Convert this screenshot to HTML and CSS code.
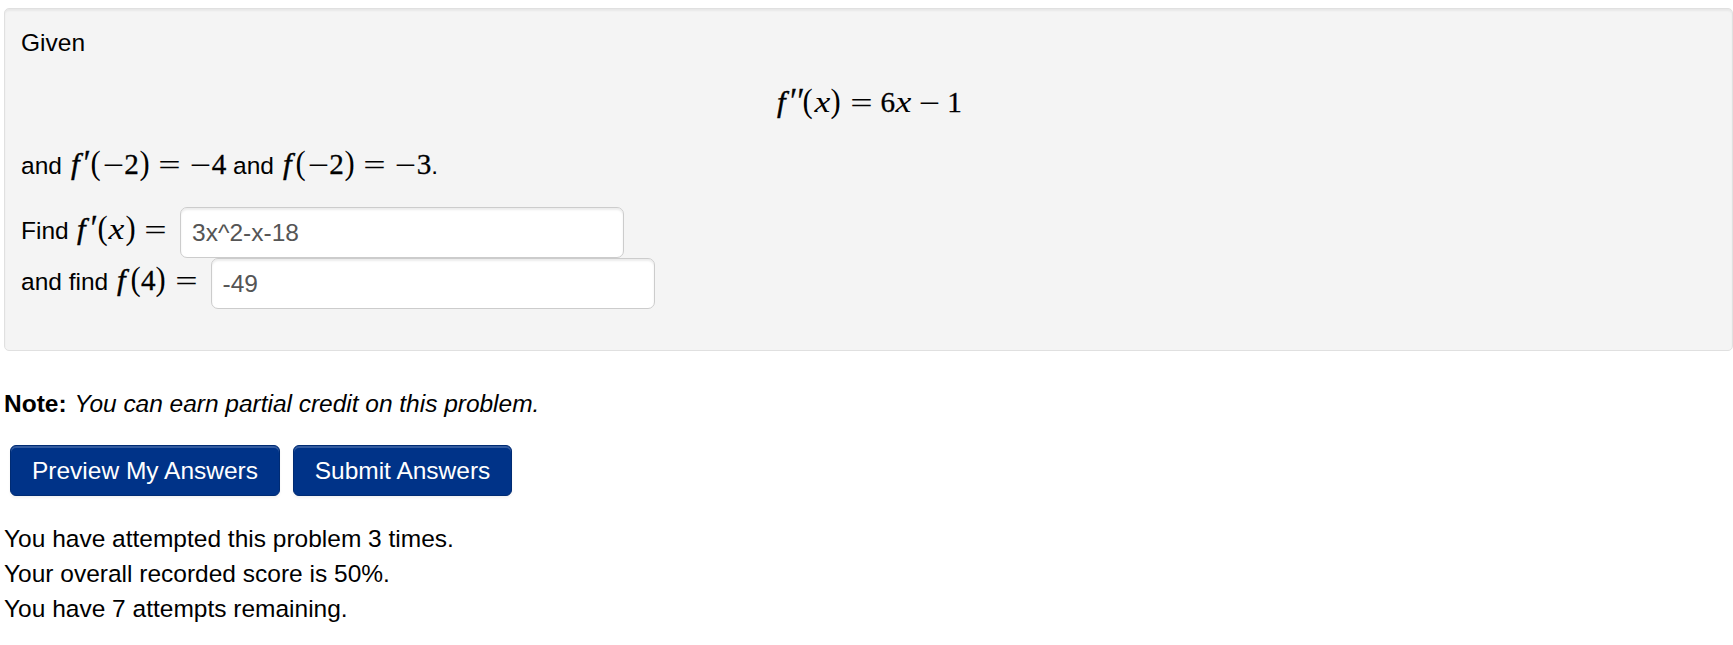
FILE: index.html
```html
<!DOCTYPE html>
<html lang="en">
<head>
  <meta charset="UTF-8" />
  <meta name="viewport" content="width=device-width, initial-scale=1.0"/>
  <title>Homework Problem</title>
  <link rel="stylesheet" href="styles.css">
</head>
<body>

<form class="problem" onsubmit="return false">
  <div class="well">
    <p class="line">Given</p>
    <p class="line display">
      <span class="math"><i class="f">f</i><i class="prime double">′′</i><b class="open">(</b><i class="x">x</i><b class="close">)</b><b class="rel">=</b><b class="num">6</b><i class="x">x</i><b class="op binary">−</b><b class="num">1</b></span>
    </p>
    <p class="line given">and <span class="math"><i class="f">f</i><i class="prime">′</i><b class="open">(</b><b class="op">−</b><b class="num">2</b><b class="close">)</b><b class="rel">=</b><b class="op">−</b><b class="num">4</b></span> and <span class="math"><i class="f">f</i><b class="open">(</b><b class="op">−</b><b class="num">2</b><b class="close">)</b><b class="rel">=</b><b class="op">−</b><b class="num">3</b></span>.</p>
    <div class="answer first">
      <label for="answer1">Find <span class="math"><i class="f">f</i><i class="prime">′</i><b class="open">(</b><i class="x">x</i><b class="close">)</b><b class="rel last">=</b></span></label>
      <input type="text" id="answer1" value="3x^2-x-18" />
    </div>
    <div class="answer">
      <label for="answer2">and find <span class="math"><i class="f">f</i><b class="open">(</b><b class="num">4</b><b class="close">)</b><b class="rel last">=</b></span></label>
      <input type="text" id="answer2" value="-49" />
    </div>
  </div>

  <p class="note"><strong>Note:</strong> <em>You can earn partial credit on this problem.</em></p>

  <div class="buttons">
    <button type="button" class="preview">Preview My Answers</button>
    <button type="submit" class="submit">Submit Answers</button>
  </div>

  <div class="score">
    <p>You have attempted this problem 3 times.</p>
    <p>Your overall recorded score is 50%.</p>
    <p>You have 7 attempts remaining.</p>
  </div>
</form>

</body>
</html>
```
FILE: styles.css
```css
* {
  box-sizing: border-box;
}
body {
  margin: 0;
  padding: 8px 0 0 4px;
  background: white;
  color: black;
  font-family: "Liberation Sans", Arial, sans-serif;
  font-size: 24.5px;
  line-height: 35px;
}
p {
  margin: 0;
}
.well {
  height: 343px;
  padding: 16px;
  background: #f4f4f4;
  border: 1px solid #e0e0e0;
  border-radius: 5px;
  box-shadow: inset 0 2px 2px rgba(0, 0, 0, 0.05);
}
.line {
  height: 35px;
  white-space: nowrap;
}
.display {
  margin-top: 26px;
  text-align: center;
}
.given {
  margin-top: 27px;
}

/* math */
.math {
  font-family: "Liberation Serif", "Times New Roman", serif;
  font-size: 29.15px;
  line-height: 1;
  white-space: nowrap;
}
.math i,
.math b {
  display: inline-block;
  font-weight: normal;
  text-align: center;
  transform-origin: 50% 78%;
}
.math .f {
  width: 0.5em;
  transform: translateX(-1px) scale(1.06, 1.02);
  -webkit-text-stroke: 0.4px black;
}
.math .prime {
  width: 0.24em;
  text-align: left;
  transform: translate(-1px, 1px) scale(1.1, 1.2);
  -webkit-text-stroke: 0.3px black;
}
.math .double {
  width: 0.43em;
}
.math .open,
.math .close {
  width: 0.389em;
  transform: scale(1.05, 1.13);
}
.math .x {
  width: 0.572em;
  transform: scaleX(1.22);
}
.math .num {
  width: 0.5em;
  -webkit-text-stroke: 0.3px black;
}
.math .op,
.math .rel {
  width: 0.778em;
  transform: translateY(1px) scaleX(1.3);
}
.math .rel {
  margin: 0 0.278em;
  transform: translateY(1px) scaleX(1.36);
}
.math .binary {
  margin: 0 0.222em;
}
.math .last {
  margin-right: 0;
}

.answer {
  display: flex;
  height: 51px;
}
.first {
  margin-top: 24px;
}
.answer label {
  padding-top: 6px;
  margin-right: 13px;
  white-space: nowrap;
}
.answer input {
  width: 444px;
  height: 51px;
  padding: 0 10px 0 11px;
  color: #555;
  background: white;
  border: 1px solid #ccc;
  border-radius: 7px;
  box-shadow: inset 0 2px 2px rgba(0, 0, 0, 0.075);
  font-family: inherit;
  font-size: 24.5px;
}

.note {
  margin-top: 35px;
}
.note em {
  margin-left: 1px;
  letter-spacing: -0.02px;
}
.buttons {
  display: flex;
  gap: 13px;
  margin-top: 24px;
  padding-left: 6px;
}
.buttons button {
  height: 51px;
  padding: 0;
  color: white;
  background: #003388;
  border: 1px solid #002b73;
  border-radius: 6px;
  box-shadow: inset 0 2px 0 rgba(255, 255, 255, 0.2), 0 2px 3px rgba(0, 0, 0, 0.05);
  font-family: inherit;
  font-size: 24.5px;
}
.preview {
  width: 270px;
}
.submit {
  width: 219px;
}
.score {
  margin-top: 25px;
}
```
